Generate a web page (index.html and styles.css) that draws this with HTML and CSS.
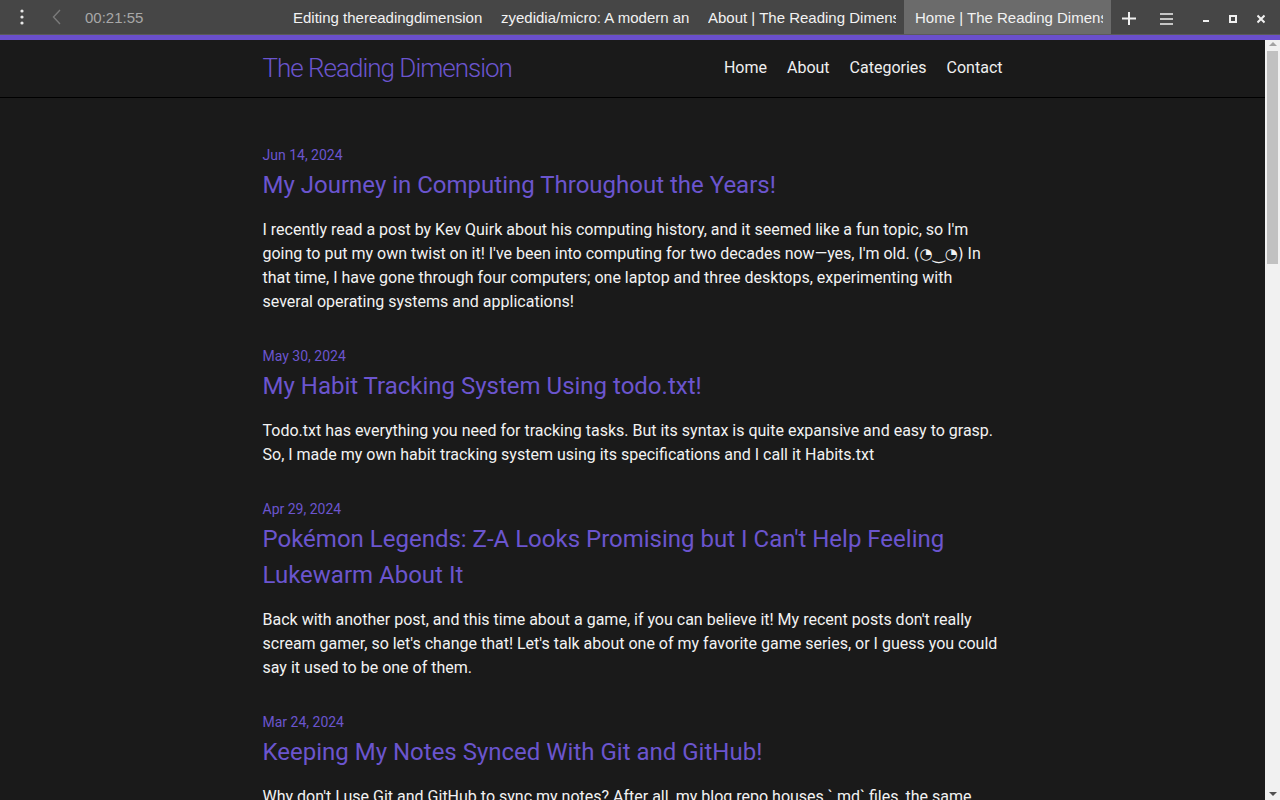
FILE: index.html
```html
<!DOCTYPE html>
<html lang="en">
<head>
<meta charset="utf-8">
<title>Home | The Reading Dimension</title>
<link rel="stylesheet" href="styles.css">
</head>
<body>
<div class="chrome">
  <div class="chrome-left">
    <span class="icon-btn">
      <svg width="4" height="16" viewBox="0 0 4 16"><circle cx="2" cy="2" r="1.6" fill="#e8e8e8"/><circle cx="2" cy="8" r="1.6" fill="#e8e8e8"/><circle cx="2" cy="14" r="1.6" fill="#e8e8e8"/></svg>
    </span>
    <span class="icon-btn back">
      <svg width="9" height="16" viewBox="0 0 9 16"><path d="M8 1 L1.5 8 L8 15" fill="none" stroke="#7a7a7a" stroke-width="1.4"/></svg>
    </span>
    <span class="clock">00:21:55</span>
  </div>
  <div class="tabs">
    <div class="tab"><span class="tab-label">Editing thereadingdimension</span></div>
    <div class="tab"><span class="tab-label">zyedidia/micro: A modern and intuitive terminal-based text editor</span></div>
    <div class="tab"><span class="tab-label">About | The Reading Dimension</span></div>
    <div class="tab active"><span class="tab-label">Home | The Reading Dimension</span></div>
  </div>
  <div class="chrome-right">
    <svg class="ctl plus" width="14" height="35" viewBox="0 0 14 35"><path d="M7 12 V25 M0 18.5 H14" stroke="#f0f0f0" stroke-width="2"/></svg>
    <svg class="ctl menu" width="13" height="35" viewBox="0 0 13 35"><path d="M0 14 H13 M0 19 H13 M0 24 H13" stroke="#f0f0f0" stroke-width="1.6"/></svg>
    <svg class="ctl mini" width="6" height="35" viewBox="0 0 6 35"><path d="M0 21 H6" stroke="#f0f0f0" stroke-width="2"/></svg>
    <svg class="ctl maxi" width="8" height="35" viewBox="0 0 8 35"><rect x="1" y="16" width="6" height="6" fill="none" stroke="#f0f0f0" stroke-width="2"/></svg>
    <svg class="ctl close" width="8" height="35" viewBox="0 0 8 35"><path d="M0.5 15.5 L7.5 22.5 M7.5 15.5 L0.5 22.5" stroke="#f0f0f0" stroke-width="2"/></svg>
  </div>
</div>
<div class="accent"></div>
<div class="viewport">
  <div class="page">
    <header class="site-header">
      <div class="wrap header-inner">
        <a class="site-title" href="#">The Reading Dimension</a>
        <nav class="nav">
          <a href="#">Home</a>
          <a href="#">About</a>
          <a href="#">Categories</a>
          <a href="#">Contact</a>
        </nav>
      </div>
    </header>
    <main class="wrap posts">
      <article class="post">
        <div class="date">Jun 14, 2024</div>
        <h2 class="post-title"><a href="#">My Journey in Computing Throughout the Years!</a></h2>
        <p>I recently read a post by Kev Quirk about his computing history, and it seemed like a fun topic, so I'm going to put my own twist on it! I've been into computing for two decades now—yes, I'm old. <span class="kao">(◔‿◔)</span> In that time, I have gone through four computers; one laptop and three desktops, experimenting with several operating systems and applications!</p>
      </article>
      <article class="post">
        <div class="date">May 30, 2024</div>
        <h2 class="post-title"><a href="#">My Habit Tracking System Using todo.txt!</a></h2>
        <p>Todo.txt has everything you need for tracking tasks. But its syntax is quite expansive and easy to grasp. So, I made my own habit tracking system using its specifications and I call it Habits.txt</p>
      </article>
      <article class="post">
        <div class="date">Apr 29, 2024</div>
        <h2 class="post-title"><a href="#">Pokémon Legends: Z-A Looks Promising but I Can't Help Feeling Lukewarm About It</a></h2>
        <p>Back with another post, and this time about a game, if you can believe it! My recent posts don't really scream gamer, so let's change that! Let's talk about one of my favorite game series, or I guess you could say it used to be one of them.</p>
      </article>
      <article class="post">
        <div class="date">Mar 24, 2024</div>
        <h2 class="post-title"><a href="#">Keeping My Notes Synced With Git and GitHub!</a></h2>
        <p>Why don't I use Git and GitHub to sync my notes? After all, my blog repo houses `.md` files, the same kind of files I use for my notes, so why not keep everything in one place and in sync?</p>
      </article>
    </main>
  </div>
  <div class="scrollbar">
    <span class="arrow up"></span>
    <div class="track"><div class="thumb"></div></div>
    <span class="arrow down"></span>
  </div>
</div>
</body>
</html>
```

FILE: styles.css
```css
* { box-sizing: border-box; }

html, body {
  margin: 0;
  padding: 0;
  height: 800px;
  overflow: hidden;
}

body {
  display: flex;
  flex-direction: column;
  background: #1a1a1a;
  font-family: Roboto, "Liberation Sans", sans-serif;
}

/* browser chrome */
.chrome {
  height: 35px;
  flex: 0 0 35px;
  background: #464646;
  display: flex;
  align-items: stretch;
  font-family: "Liberation Sans", Arial, sans-serif;
  font-size: 15px;
  color: #f0f0f0;
  border-bottom: 1px solid #5a5a5a;
}

.chrome-left {
  display: flex;
  align-items: center;
  width: 283px;
  flex: 0 0 283px;
}

.icon-btn {
  display: flex;
  align-items: center;
  justify-content: center;
}

.chrome-left .icon-btn:first-child {
  width: 44px;
}

.back {
  width: 24px;
}

.clock {
  margin-left: 17px;
  color: #a8a8a8;
}

.tabs {
  display: flex;
  flex: 0 0 828px;
}

.tab {
  width: 207px;
  padding: 0 8px 0 11px;
  line-height: 35px;
  color: #f2f2f2;
}

.tab:first-child {
  padding-left: 10px;
}

.tab-label {
  display: block;
  white-space: nowrap;
  overflow: hidden;
}

.tab.active {
  background: #6b6b6b;
}

.chrome-right {
  display: flex;
  align-items: flex-start;
}

.ctl { display: block; }
.plus { margin-left: 11px; }
.menu { margin-left: 24px; }
.mini { margin-left: 30px; }
.maxi { margin-left: 20px; }
.close { margin-left: 20px; }

.accent {
  height: 5px;
  flex: 0 0 5px;
  background: #6a4fcc;
}

.viewport {
  flex: 1;
  display: flex;
  min-height: 0;
}

.page {
  flex: 1;
  overflow: hidden;
  color: #f2f2f2;
}

.scrollbar {
  width: 15px;
  flex: 0 0 15px;
  background: #f1f1f1;
  display: flex;
  flex-direction: column;
  align-items: center;
}

.arrow {
  width: 0;
  height: 0;
  border-left: 4px solid transparent;
  border-right: 4px solid transparent;
}

.arrow.up {
  border-bottom: 4px solid #a3a3a3;
  margin-top: 2px;
}

.arrow.down {
  border-top: 4px solid #505050;
  margin-bottom: 4px;
}

.track {
  flex: 1;
  width: 100%;
  padding: 5px 2px 0;
}

.thumb {
  height: 213px;
  background: #c1c1c1;
}

/* site */
.wrap {
  width: 740px;
  margin: 0 auto;
}

.site-header {
  height: 58px;
  border-bottom: 1px solid #000;
}

.header-inner {
  height: 57px;
  padding-bottom: 2px;
  display: flex;
  align-items: center;
  justify-content: space-between;
}

.site-title {
  font-weight: 300;
  font-size: 26px;
  color: #6b55ce;
  text-decoration: none;
  letter-spacing: -1px;
}

.nav {
  display: flex;
  gap: 20px;
}

.nav a {
  color: #efefef;
  text-decoration: none;
  font-size: 16px;
}

.posts {
  padding-top: 45px;
}

.post {
  margin-bottom: 30px;
}

.date {
  font-size: 14px;
  line-height: 24px;
  color: #6b55ce;
}

.post-title {
  margin: 0;
  font-size: 24px;
  font-weight: 400;
  line-height: 36px;
}

.post-title a {
  color: #6b55ce;
  text-decoration: none;
}

.post p {
  margin: 15px 0 0;
  font-size: 16px;
  line-height: 24px;
}

.kao {
  font-family: "DejaVu Sans", sans-serif;
  font-size: 15px;
}
```
